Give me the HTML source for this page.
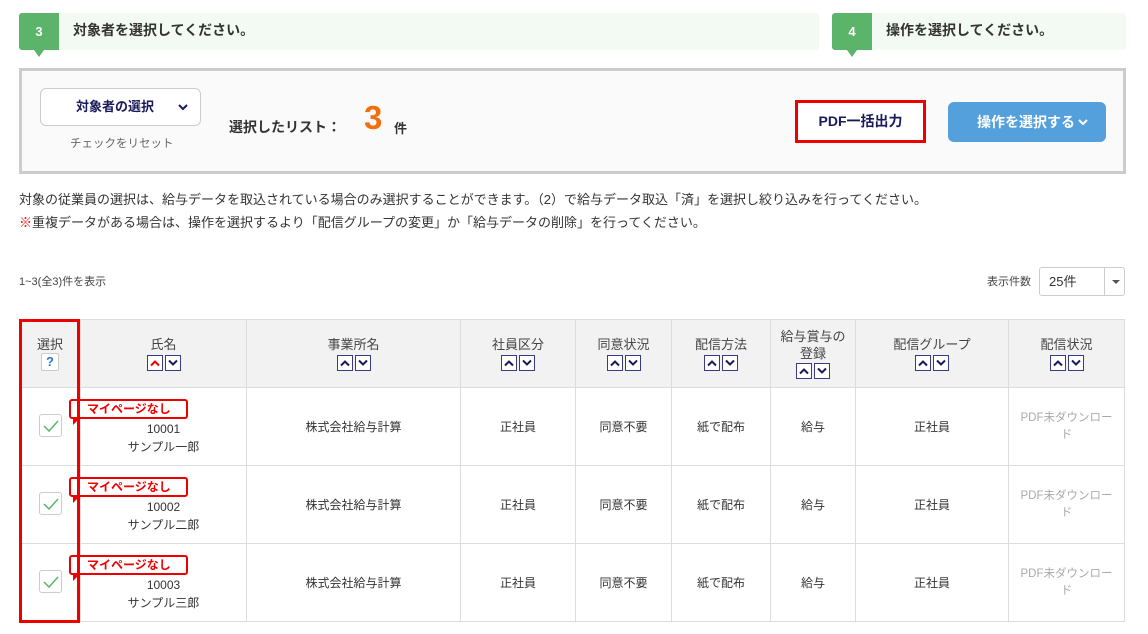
<!DOCTYPE html>
<html><head><meta charset="utf-8"><style>
*{margin:0;padding:0;box-sizing:border-box}
body{width:1148px;height:634px;overflow:hidden;background:#fff;font-family:"Liberation Sans","Noto Sans CJK JP",sans-serif;color:#333;position:relative}
.a{position:absolute}
.step{position:absolute;top:13px;height:37px;background:#f3f9f3;border-radius:3px}
.num{position:absolute;left:0;top:0;width:40px;height:37px;background:#5cb46a;color:#fff;font-weight:bold;font-size:13px;text-align:center;line-height:37px;border-radius:3px 0 0 3px}
.num:after{content:"";position:absolute;left:15px;bottom:-7px;border-left:5px solid transparent;border-right:5px solid transparent;border-top:7px solid #5cb46a}
.st{position:absolute;left:54px;top:0;line-height:35px;font-size:14px;font-weight:bold;color:#333}
table{position:absolute;left:19px;top:319px;border-collapse:collapse;table-layout:fixed;font-size:12px}
td,th{border:1px solid #ddd;text-align:center;vertical-align:middle}
th{background:#f2f2f2;font-weight:normal;font-size:13px;color:#444;height:68px;line-height:17px}
td{height:78px;color:#333}
.ar{display:inline-block;width:16px;height:16px;border:1px solid #3a3a8a;background:#fff;margin:0 1px;vertical-align:middle;position:relative}
.ar svg{position:absolute;left:2px;top:3px}
.cb{display:inline-block;width:23px;height:23px;border:1px solid #ccc;border-radius:3px;background:#fff;position:relative}
.tag{position:absolute;left:69px;width:119px;height:20px;border:2px solid #e00;border-radius:3px;background:#fff;color:#e00;font-size:12px;font-weight:bold;line-height:16px;padding-left:16px}
.tag:after{content:"";position:absolute;left:2px;bottom:-8px;border-left:6px solid #e00;border-bottom:6px solid transparent}
.gr{color:#aaa;font-size:11.5px;line-height:17px}
</style></head><body>
<div class="step" style="left:19px;width:800px"><div class="num">3</div><div class="st">対象者を選択してください。</div></div>
<div class="step" style="left:832px;width:294px"><div class="num">4</div><div class="st">操作を選択してください。</div></div>

<div class="a" style="left:19px;top:68px;width:1107px;height:106px;border:3px solid #ccc;background:#fafafa"></div>
<div class="a" style="left:40px;top:88px;width:161px;height:38px;border:1px solid #ccc;border-radius:6px;background:#fff;font-size:13px;font-weight:bold;color:#1a1a5a;line-height:36px;padding-left:35px">対象者の選択<svg style="position:absolute;left:137px;top:15px" width="10" height="7" viewBox="0 0 10 7"><path d="M1 1l4 4 4-4" stroke="#1a1a5a" stroke-width="2" fill="none"/></svg></div>
<div class="a" style="left:70px;top:135px;font-size:11.5px;color:#666">チェックをリセット</div>
<div class="a" style="left:229px;top:117px;font-size:14px;font-weight:bold">選択したリスト：</div>
<div class="a" style="left:364px;top:99px;font-size:33px;font-weight:bold;color:#f07010">3</div>
<div class="a" style="left:394px;top:118px;font-size:13px;font-weight:bold">件</div>
<div class="a" style="left:795px;top:100px;width:131px;height:43px;border:3px solid #e00;background:#fff;font-size:14px;font-weight:bold;color:#1a1a5a;text-align:center;line-height:37px">PDF一括出力</div>
<div class="a" style="left:948px;top:102px;width:158px;height:40px;background:#54a0dd;border-radius:6px;color:#fff;font-size:14px;font-weight:bold;line-height:40px;padding-left:29px">操作を選択する<svg style="position:absolute;left:130px;top:17px" width="10" height="7" viewBox="0 0 10 7"><path d="M1 1l4 4 4-4" stroke="#fff" stroke-width="2" fill="none"/></svg></div>

<div class="a" style="left:19px;top:189px;font-size:13px;color:#333">対象の従業員の選択は、給与データを取込されている場合のみ選択することができます。（2）で給与データ取込「済」を選択し絞り込みを行ってください。</div>
<div class="a" style="left:19px;top:212px;font-size:13px;color:#333"><span style="color:#e00;font-weight:bold">※</span>重複データがある場合は、操作を選択するより「配信グループの変更」か「給与データの削除」を行ってください。</div>
<div class="a" style="left:19px;top:273px;font-size:11px;color:#444">1~3(全3)件を表示</div>
<div class="a" style="left:987px;top:273px;font-size:11px;color:#444">表示件数</div>
<div class="a" style="left:1039px;top:267px;width:86px;height:29px;border:1px solid #ccc;border-radius:3px;background:#fff;font-size:13px;line-height:27px;padding-left:9px">25件<div style="position:absolute;left:64px;top:0;width:1px;height:27px;background:#ccc"></div><div style="position:absolute;left:72px;top:12px;border-left:4px solid transparent;border-right:4px solid transparent;border-top:4px solid #555"></div></div>

<table>
<colgroup><col style="width:61px"><col style="width:166px"><col style="width:214px"><col style="width:115px"><col style="width:96px"><col style="width:99px"><col style="width:85px"><col style="width:153px"><col style="width:116px"></colgroup>
<tbody>
<tr><th>選択<br><span style="display:inline-block;width:18px;height:18px;border:1px solid #ccc;border-radius:2px;background:#fff;color:#2a7bd0;font-weight:bold;font-size:13px;line-height:16px">?</span></th>
<th>氏名<br><span class="ar"><svg width="10" height="8"><path d="M1 6.5l4-4 4 4" stroke="#e00" stroke-width="2" fill="none"/></svg></span><span class="ar"><svg width="10" height="8"><path d="M1 1.5l4 4 4-4" stroke="#1a1a5a" stroke-width="2" fill="none"/></svg></span></th>
<th>事業所名<br>AR</th><th>社員区分<br>AR</th><th>同意状況<br>AR</th><th>配信方法<br>AR</th><th>給与賞与の<br>登録<br>AR</th><th>配信グループ<br>AR</th><th>配信状況<br>AR</th></tr>
</tbody>
</table>
<script>
var ar='<span class="ar"><svg width="10" height="8"><path d="M1 6.5l4-4 4 4" stroke="#1a1a5a" stroke-width="2" fill="none"/></svg></span><span class="ar"><svg width="10" height="8"><path d="M1 1.5l4 4 4-4" stroke="#1a1a5a" stroke-width="2" fill="none"/></svg></span>';
var tb=document.querySelector('tbody');
tb.innerHTML=tb.innerHTML.replace(/AR/g,ar);
var n=['一','二','三'],h='';
for(var i=0;i<3;i++){h+='<tr><td><span class="cb"><svg style="position:absolute;left:3px;top:4px" width="16" height="13"><path d="M1 7l5 5 9-10" stroke="#5cb46a" stroke-width="1.5" fill="none"/></svg></span></td><td style="padding-top:22px;line-height:18px">1000'+(i+1)+'<br>サンプル'+n[i]+'郎</td><td>株式会社給与計算</td><td>正社員</td><td>同意不要</td><td>紙で配布</td><td>給与</td><td>正社員</td><td class="gr">PDF未ダウンロー<br>ド</td></tr>';}
tb.insertAdjacentHTML('beforeend',h);
</script>
<div class="tag" style="top:399px">マイページなし</div>
<div class="tag" style="top:477px">マイページなし</div>
<div class="tag" style="top:555px">マイページなし</div>
<div class="a" style="left:19px;top:319px;width:61px;height:304px;border:3px solid #e00"></div>
</body></html>
